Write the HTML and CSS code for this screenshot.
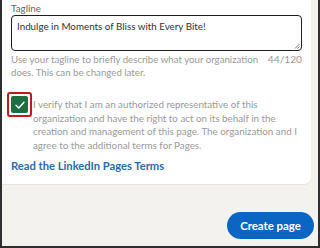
FILE: index.html
```html
<!DOCTYPE html>
<html>
<head>
<meta charset="utf-8">
<link rel="stylesheet" href="styles.css">
</head>
<body>
<div class="frame">
  <div class="card">
    <div class="label">Tagline</div>
    <div class="textarea">
      <span class="value">Indulge in Moments of Bliss with Every Bite!</span>
      <svg class="grip" width="6" height="6" viewBox="0 0 6 6"><path d="M5.5 1 L1 5.5 M5.5 3.5 L3.5 5.5" stroke="#555" stroke-width="0.8" fill="none"/></svg>
    </div>
    <div class="help">
      <span class="help-text">Use your tagline to briefly describe what your organization<br>does. This can be changed later.</span>
      <span class="count">44/120</span>
    </div>
    <div class="verify">
      <div class="focus">
        <div class="box">
          <svg width="12" height="12" viewBox="0 0 12 12"><path d="M2 6.3 L4.8 9 L10 3.2" stroke="#fff" stroke-width="1.4" fill="none" stroke-linecap="round" stroke-linejoin="round"/></svg>
        </div>
      </div>
      <p class="verify-text">I verify that I am an authorized representative of this<br>organization and have the right to act on its behalf in the<br>creation and management of this page. The organization and I<br>agree to the additional terms for Pages.</p>
    </div>
    <a class="terms">Read the LinkedIn Pages Terms</a>
  </div>
  <div class="actions">
    <button class="create">Create page</button>
  </div>
</div>
</body>
</html>
```
FILE: styles.css
```css
html, body {
  margin: 0;
  padding: 0;
}
body {
  font-family: "Lato", "Noto Sans", sans-serif;
}
.frame {
  box-sizing: border-box;
  width: 320px;
  height: 248px;
  background: #f3f2ef;
  border-left: 2px solid #2e2e2e;
  border-right: 2px solid #2e2e2e;
  border-bottom: 2px solid #2e2e2e;
  overflow: hidden;
}
.card {
  background: #fff;
  height: 184px;
  box-sizing: border-box;
  margin-right: 7px;
  border-bottom-right-radius: 7px;
  padding: 1px 9px 0 9px;
  box-shadow: 0 1px 1px rgba(0,0,0,0.06);
}
.label {
  font-size: 9.8px;
  line-height: 14px;
  color: #666;
}
.textarea {
  position: relative;
  box-sizing: border-box;
  height: 36px;
  border: 1.5px solid #1f1f1f;
  border-radius: 4px;
  padding: 4px 5px;
}
.value {
  display: block;
  font-size: 9.8px;
  line-height: 12px;
  color: #333;
}
.grip {
  position: absolute;
  right: 1px;
  bottom: 1px;
}
.help {
  display: flex;
  justify-content: space-between;
  margin-top: 2px;
  font-size: 9.7px;
  line-height: 13px;
  color: #9a9a9a;
}
.help-text {
  white-space: nowrap;
}
.count {
  white-space: nowrap;
  font-size: 10.2px;
}
.verify {
  display: flex;
  align-items: flex-start;
  margin-top: 13px;
  margin-left: -4px;
}
.focus {
  box-sizing: border-box;
  width: 25px;
  height: 25px;
  flex: none;
  border: 2px solid #c8161d;
  border-radius: 3px;
  padding: 2px;
}
.box {
  width: 17px;
  height: 17px;
  background: #1d6f42;
  border-radius: 2px;
  display: flex;
  align-items: center;
  justify-content: center;
}
.verify-text {
  margin: 6px 0 0 1px;
  font-size: 9.8px;
  line-height: 13.5px;
  color: #9a9a9a;
  white-space: nowrap;
}
.terms {
  display: block;
  margin-top: 6px;
  font-size: 11.2px;
  line-height: 16px;
  font-weight: 700;
  color: #2b6aab;
}
.actions {
  display: flex;
  justify-content: flex-end;
  padding: 28px 4px 0 0;
}
.create {
  width: 87px;
  height: 27px;
  border: none;
  border-radius: 14px;
  background: #0a66c2;
  color: #fff;
  font-family: "Lato", "Noto Sans", sans-serif;
  font-size: 11.4px;
  font-weight: 700;
  padding: 0;
}
```
